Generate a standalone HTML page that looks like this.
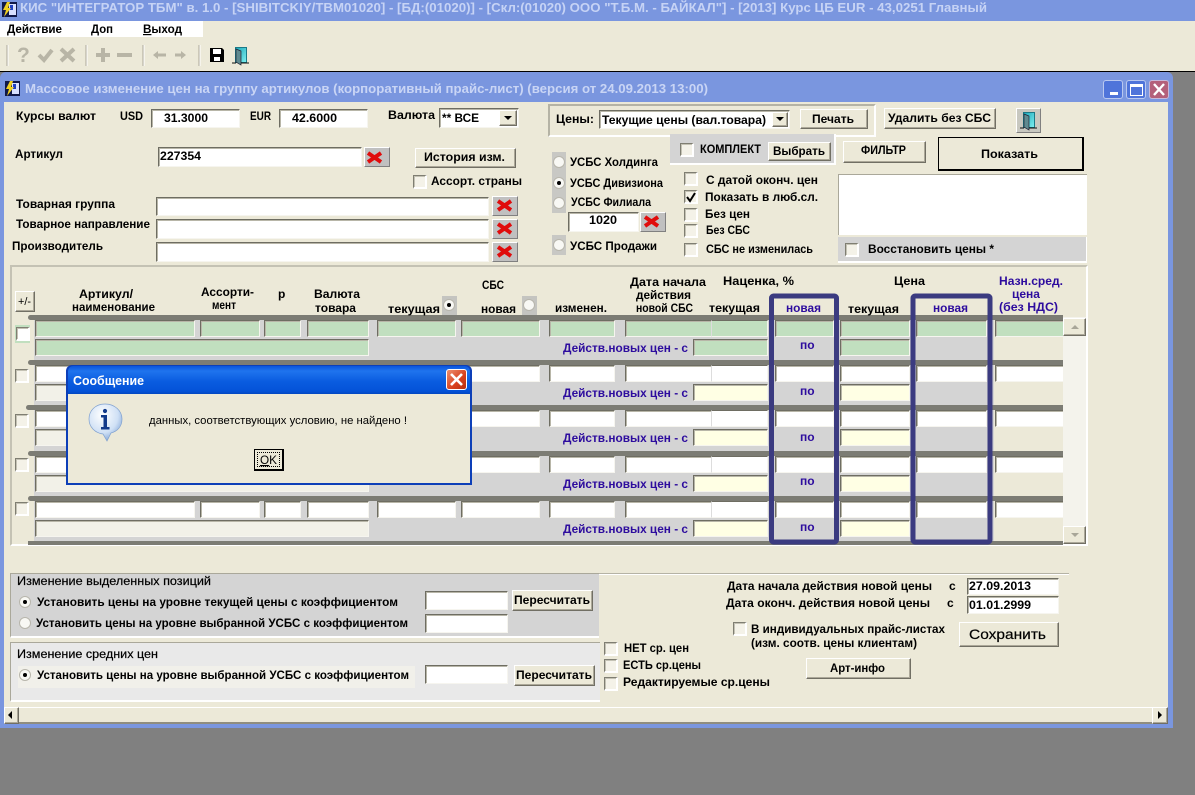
<!DOCTYPE html>
<html><head><meta charset="utf-8"><style>
html,body{margin:0;padding:0;width:1195px;height:795px;overflow:hidden;background:#808080}
#p{position:relative;width:1195px;height:795px;overflow:hidden;background:#808080}
#p div,#p i{position:absolute;display:block;box-sizing:border-box}
svg{position:absolute;left:0;top:0;overflow:visible}
text{font-family:"Liberation Sans",sans-serif;font-size:12px;font-weight:bold;fill:#000}
.n{font-weight:normal;font-size:11px}.u{fill:#2d0c9e}
.i{background:#fff;border-top:1px solid #6e6d62;border-left:1px solid #6e6d62;border-right:1px solid #f6f5ef;border-bottom:1px solid #f6f5ef;box-shadow:inset 1px 1px 0 #b8b6a8}
.b{background:#ece9d8;border-top:1px solid #fff;border-left:1px solid #fff;border-right:1px solid #716f64;border-bottom:1px solid #716f64;box-shadow:inset -1px -1px 0 #aca899}
.x{background:#c0c0c0;border-top:1px solid #fff;border-left:1px solid #fff;border-right:1px solid #808080;border-bottom:1px solid #808080}
.c{background:#f4f2e8;border-top:1px solid #7f7e72;border-left:1px solid #7f7e72;border-right:2px solid #fff;border-bottom:2px solid #fff;box-shadow:inset 1px 1px 0 #c4c2b4;width:14px;height:14px}
.g{background:#d4d4d4}
.r{left:0;width:1087px;height:46px}
.d{left:28px;width:1035px;height:5px;top:0;background:#7c7c74;border-radius:3px 0 0 3px}
.bg{left:34px;width:960px;height:41px;top:5px;background:#d4d4d4}
.t,.s{height:17px}.t{top:5px}.s{top:24px}
.a1{left:35px;width:160px}.a2{left:200px;width:60px}.a3{left:264px;width:37px}.a4{left:307px;width:62px}.a5{left:377px;width:79px}.a6{left:461px;width:79px}.a7{left:549px;width:66px}.a8{left:625px;width:87px}.a9{left:711px;width:57px;border-left:1px solid #ddd;box-shadow:none}.a10{left:775px;width:59px}.a11{left:840px;width:70px}.a12{left:916px;width:71px}.a13{left:995px;width:68px;border-right:0}
.w{left:35px;width:334px;background:#f2f1e8}
.y1{left:693px;width:75px;background:#ffffe4}.y2{left:840px;width:70px;background:#ffffe4}
.gr .i{background:#c1dfbf}.gr .i.w{background:#c1dfbf}
</style></head><body><div id="p">
<!-- top app chrome -->
<div style="left:0;top:0;width:1195px;height:21px;background:#7a96df"></div>
<div style="left:0;top:21px;width:1195px;height:50px;background:#ece9d8"></div>
<div style="left:0;top:21px;width:203px;height:16px;background:#fff"></div>
<div style="left:0;top:71px;width:1195px;height:1px;background:#000"></div>
<!-- window -->
<div style="left:0;top:72px;width:1173px;height:656px;background:#7a96df;border-radius:6px 6px 0 0"></div>
<div style="left:4px;top:102px;width:1164px;height:622px;background:#ece9d8"></div>
<div style="left:1103px;top:80px;width:20px;height:19px;background:#4f74da;border:1px solid #b9c8f0;border-radius:3px"></div>
<div style="left:1126px;top:80px;width:20px;height:19px;background:#4f74da;border:1px solid #b9c8f0;border-radius:3px"></div>
<div style="left:1149px;top:80px;width:20px;height:19px;background:#b4607a;border:1px solid #c8b8d8;border-radius:3px"></div>
<div style="left:1110px;top:92px;width:8px;height:3px;background:#fff"></div>
<div style="left:1130px;top:84px;width:13px;height:12px;border:1px solid #fff;border-top:3px solid #fff"></div>
<!-- top form -->
<div class="i" style="left:151px;top:109px;width:89px;height:19px"></div>
<div class="i" style="left:279px;top:109px;width:89px;height:19px"></div>
<div class="i" style="left:439px;top:108px;width:80px;height:20px"></div>
<div class="b" style="left:499px;top:110px;width:18px;height:16px"></div>
<div class="i" style="left:158px;top:147px;width:204px;height:20px"></div>
<div class="x" style="left:364px;top:147px;width:26px;height:20px"></div>
<div class="b" style="left:415px;top:148px;width:101px;height:20px"></div>
<div class="c" style="left:413px;top:175px"></div>
<div class="i" style="left:156px;top:197px;width:333px;height:19px"></div>
<div class="x" style="left:492px;top:196px;width:26px;height:20px"></div>
<div class="i" style="left:156px;top:219px;width:333px;height:20px"></div>
<div class="x" style="left:492px;top:219px;width:26px;height:20px"></div>
<div class="i" style="left:156px;top:242px;width:333px;height:20px"></div>
<div class="x" style="left:492px;top:242px;width:26px;height:20px"></div>
<div style="left:548px;top:104px;width:328px;height:33px;border:2px solid #fff;border-top-color:#b5b3a5;border-left-color:#b5b3a5"></div>
<div class="i" style="left:599px;top:110px;width:191px;height:19px"></div>
<div class="b" style="left:772px;top:112px;width:16px;height:15px"></div>
<div class="b" style="left:800px;top:109px;width:68px;height:20px"></div>
<div class="b" style="left:884px;top:108px;width:112px;height:21px"></div>
<div class="x" style="left:1016px;top:108px;width:25px;height:25px;background:#c8c8c0"></div>
<div class="g" style="left:670px;top:134px;width:166px;height:31px;border-right:2px solid #fff;border-bottom:2px solid #fff"></div>
<div class="c" style="left:680px;top:143px"></div>
<div class="b" style="left:768px;top:142px;width:63px;height:19px"></div>
<div class="b" style="left:843px;top:141px;width:83px;height:22px"></div>
<div style="left:938px;top:137px;width:146px;height:34px;background:#ece9d8;border:2px solid #000;border-top:1px solid #000;border-left:1px solid #000"></div>
<div class="g" style="left:552px;top:152px;width:14px;height:21px;background:#c8c8c4"></div>
<div class="g" style="left:552px;top:173px;width:14px;height:20px;background:#c8c8c4"></div>
<div class="g" style="left:552px;top:193px;width:14px;height:20px;background:#c8c8c4"></div>
<div class="g" style="left:552px;top:235px;width:14px;height:20px;background:#c8c8c4"></div>
<div class="i" style="left:568px;top:212px;width:71px;height:20px"></div>
<div class="x" style="left:640px;top:212px;width:26px;height:20px"></div>
<div class="c" style="left:684px;top:172px"></div><div class="c" style="left:684px;top:190px"></div><div class="c" style="left:684px;top:208px"></div><div class="c" style="left:684px;top:224px"></div><div class="c" style="left:684px;top:243px"></div>
<div style="left:838px;top:174px;width:249px;height:61px;background:#fff;border-top:1px solid #aaa89a;border-left:1px solid #aaa89a"></div>
<div class="g" style="left:838px;top:237px;width:249px;height:26px;border-right:1px solid #fff;border-bottom:2px solid #fff"></div>
<div class="c" style="left:845px;top:243px"></div>
<!-- grid -->
<div style="left:10px;top:265px;width:1078px;height:281px;background:#ece9d8;border:2px solid #fff;border-top-color:#c4c2b4;border-left-color:#c4c2b4"></div>
<div class="b" style="left:15px;top:291px;width:20px;height:21px"></div>
<div class="g" style="left:442px;top:296px;width:15px;height:19px;background:#c4c4c0"></div>
<div class="g" style="left:522px;top:296px;width:15px;height:19px;background:#c4c4c0"></div>
<div style="left:15px;top:325px;width:15px;height:18px;background:#c1dfbf"></div>
<div class="r gr" style="top:315px"><div class="bg"></div><div class="d"></div><div class="c" style="left:16px;top:12px;background:#fff"></div>
<div class="i t a1"></div><div class="i t a2"></div><div class="i t a3"></div><div class="i t a4"></div><div class="i t a5"></div><div class="i t a6"></div><div class="i t a7"></div><div class="i t a8"></div><div class="i t a9"></div><div class="i t a10"></div><div class="i t a11"></div><div class="i t a12"></div><div class="i t a13"></div><div class="i s w"></div><div class="i s y1"></div><div class="i s y2"></div></div>
<div class="r" style="top:360px"><div class="bg"></div><div class="d"></div><div class="c" style="left:15px;top:9px"></div>
<div class="i t a1"></div><div class="i t a2"></div><div class="i t a3"></div><div class="i t a4"></div><div class="i t a5"></div><div class="i t a6"></div><div class="i t a7"></div><div class="i t a8"></div><div class="i t a9"></div><div class="i t a10"></div><div class="i t a11"></div><div class="i t a12"></div><div class="i t a13"></div><div class="i s w"></div><div class="i s y1"></div><div class="i s y2"></div></div>
<div class="r" style="top:405px"><div class="bg"></div><div class="d" style="left:26px;width:1037px"></div><div class="c" style="left:15px;top:9px"></div>
<div class="i t a1"></div><div class="i t a2"></div><div class="i t a3"></div><div class="i t a4"></div><div class="i t a5"></div><div class="i t a6"></div><div class="i t a7"></div><div class="i t a8"></div><div class="i t a9"></div><div class="i t a10"></div><div class="i t a11"></div><div class="i t a12"></div><div class="i t a13"></div><div class="i s w"></div><div class="i s y1"></div><div class="i s y2"></div></div>
<div class="r" style="top:451px"><div class="bg"></div><div class="d"></div><div class="c" style="left:15px;top:7px"></div>
<div class="i t a1"></div><div class="i t a2"></div><div class="i t a3"></div><div class="i t a4"></div><div class="i t a5"></div><div class="i t a6"></div><div class="i t a7"></div><div class="i t a8"></div><div class="i t a9"></div><div class="i t a10"></div><div class="i t a11"></div><div class="i t a12"></div><div class="i t a13"></div><div class="i s w"></div><div class="i s y1"></div><div class="i s y2"></div></div>
<div class="r" style="top:496px"><div class="bg"></div><div class="d"></div><div class="c" style="left:15px;top:6px"></div>
<div class="i t a1"></div><div class="i t a2"></div><div class="i t a3"></div><div class="i t a4"></div><div class="i t a5"></div><div class="i t a6"></div><div class="i t a7"></div><div class="i t a8"></div><div class="i t a9"></div><div class="i t a10"></div><div class="i t a11"></div><div class="i t a12"></div><div class="i t a13"></div><div class="i s w"></div><div class="i s y1"></div><div class="i s y2"></div></div>
<div style="left:28px;top:541px;width:1035px;height:4px;background:#7c7c74"></div>
<!-- scrollbar -->
<div style="left:1063px;top:317px;width:23px;height:227px;background:#f4f3ec"></div>
<div class="b" style="left:1063px;top:318px;width:23px;height:18px"></div>
<div class="b" style="left:1063px;top:526px;width:23px;height:18px"></div>
<!-- bottom -->
<div class="g" style="left:10px;top:573px;width:589px;height:65px;border-top:1px solid #aaa89a;border-left:1px solid #aaa89a;border-bottom:2px solid #fff"></div>
<div class="i" style="left:425px;top:591px;width:83px;height:19px"></div>
<div class="i" style="left:425px;top:614px;width:83px;height:19px"></div>
<div class="b" style="left:512px;top:590px;width:81px;height:21px"></div>
<div style="left:599px;top:573px;width:470px;height:2px;background:#b5b3a5;border-bottom:1px solid #fff"></div>
<div style="left:10px;top:642px;width:590px;height:60px;background:#e9e9e9;border-top:1px solid #aaa89a;border-left:1px solid #aaa89a;border-bottom:2px solid #fff"></div>
<div style="left:18px;top:666px;width:397px;height:22px;background:#f1f0ea"></div>
<div class="i" style="left:425px;top:665px;width:83px;height:19px"></div>
<div class="b" style="left:514px;top:665px;width:81px;height:21px"></div>
<div class="c" style="left:604px;top:642px"></div><div class="c" style="left:604px;top:659px"></div><div class="c" style="left:604px;top:677px"></div>
<div class="i" style="left:967px;top:578px;width:92px;height:17px"></div>
<div class="i" style="left:967px;top:596px;width:92px;height:18px"></div>
<div class="c" style="left:733px;top:622px"></div>
<div class="b" style="left:959px;top:622px;width:100px;height:25px"></div>
<div class="b" style="left:806px;top:658px;width:105px;height:21px"></div>
<div style="left:4px;top:707px;width:1164px;height:17px;border-top:1px solid #fff;border-bottom:2px solid #8f8d80"></div>
<div class="b" style="left:4px;top:707px;width:15px;height:17px"></div>
<div class="b" style="left:1152px;top:707px;width:16px;height:17px"></div>

<svg width="1195" height="795" xmlns="http://www.w3.org/2000/svg">
<defs>
<linearGradient id="tl" x1="0" y1="0" x2="1" y2="1"><stop offset="0" stop-color="#1aa6b8"/><stop offset="1" stop-color="#7ff0f0"/></linearGradient>
<g id="x"><path d="M1 1L14 10M14 1L1 10" stroke="#e00c0c" stroke-width="4" fill="none"/></g>
<g id="rd"><circle cx="6" cy="6" r="5.5" fill="#f8f8f4" stroke="#b8b6ac"/></g>
<g id="dr"><rect x="3.5" y=".5" width="11" height="15" fill="url(#tl)" stroke="#1a7a88" stroke-width="1"/><path d="M4 2L9 4V18L4 15Z" fill="#5f8a90" stroke="#223" stroke-width=".7"/><path d="M0 16H4M9 16H17" stroke="#111"/></g>
<g id="ic"><rect width="15" height="15" fill="#101848"/><rect x="7" y="2" width="7" height="11" fill="#d8e0ff"/><rect x="8" y="3" width="3" height="5" fill="#2040c0"/><path d="M5 0L1 8H4L2 15L9 6H6L8 0Z" fill="#f0d020"/></g>
</defs>
<!-- title & menu -->
<use href="#ic" x="2" y="2"/>
<text x="20" y="12" textLength="967" lengthAdjust="spacingAndGlyphs" style="fill:#c6d3f5;font-size:13px">КИС "ИНТЕГРАТОР ТБМ" в. 1.0 - [SHIBITCKIY/TBM01020] - [БД:(01020)] - [Скл:(01020) ООО "Т.Б.М. - БАЙКАЛ"] - [2013] Курс ЦБ EUR - 43,0251 Главный</text>
<text x="7" y="33" textLength="55" lengthAdjust="spacingAndGlyphs"><tspan text-decoration="underline">Д</tspan>ействие</text>
<text x="91" y="33" textLength="22" lengthAdjust="spacingAndGlyphs"><tspan text-decoration="underline">Д</tspan>оп</text>
<text x="143" y="33" textLength="39" lengthAdjust="spacingAndGlyphs"><tspan text-decoration="underline">В</tspan>ыход</text>
<!-- toolbar -->
<path d="M7 45V66M86 45V66M143 45V66M199 45V66" stroke="#aca899" stroke-width="1"/>
<path d="M8 45V66M87 45V66M144 45V66M200 45V66" stroke="#fff" stroke-width="1"/>
<text x="17" y="62" style="font-size:21px;fill:#b8b5a6">?</text>
<path d="M39 55L44 60L52 50" stroke="#b8b5a6" stroke-width="4" fill="none"/>
<path d="M61 49L74 61M74 49L61 61" stroke="#b8b5a6" stroke-width="4" fill="none"/>
<path d="M96 55H110M103 48V62" stroke="#b8b5a6" stroke-width="4" fill="none"/>
<path d="M117 55H132" stroke="#b8b5a6" stroke-width="4" fill="none"/>
<path d="M153 55L158 51V53.5H166V56.5H158V59Z" fill="#b8b5a6"/>
<path d="M186 55L181 51V53.5H175V56.5H181V59Z" fill="#b8b5a6"/>
<path d="M210 48H222L224 50V62H210Z" fill="#000"/><rect x="213" y="49" width="8" height="5" fill="#fff"/><rect x="214" y="57" width="6" height="4" fill="#fff"/>
<use href="#dr" x="232" y="47"/>
<!-- window title -->
<use href="#ic" x="5" y="81"/>
<text x="25" y="93" textLength="683" lengthAdjust="spacingAndGlyphs" style="fill:#c9d5f5;font-size:13px">Массовое изменение цен на группу артикулов (корпоративный прайс-лист) (версия от 24.09.2013 13:00)</text>
<path d="M1154 84L1164 95M1164 84L1154 95" stroke="#fff" stroke-width="2.4"/>
<!-- form labels -->
<text x="16" y="120" textLength="80" lengthAdjust="spacingAndGlyphs">Курсы валют</text>
<text x="120" y="120" textLength="23" lengthAdjust="spacingAndGlyphs">USD</text>
<text x="250" y="120" textLength="21" lengthAdjust="spacingAndGlyphs">EUR</text>
<text x="388" y="119" textLength="47" lengthAdjust="spacingAndGlyphs">Валюта</text>
<text x="164" y="122" textLength="44" lengthAdjust="spacingAndGlyphs">31.3000</text>
<text x="292" y="122" textLength="45" lengthAdjust="spacingAndGlyphs">42.6000</text>
<text x="442" y="122" textLength="37" lengthAdjust="spacingAndGlyphs">** ВСЕ</text>
<path d="M504 116H512L508 120Z" fill="#000"/>
<text x="15" y="158" textLength="48" lengthAdjust="spacingAndGlyphs">Артикул</text>
<text x="160" y="160" textLength="41" lengthAdjust="spacingAndGlyphs">227354</text>
<use href="#x" x="367" y="152"/>
<text x="424" y="161" textLength="81" lengthAdjust="spacingAndGlyphs">История изм.</text>
<text x="431" y="185" textLength="91" lengthAdjust="spacingAndGlyphs">Ассорт. страны</text>
<text x="16" y="208" textLength="99" lengthAdjust="spacingAndGlyphs">Товарная группа</text>
<text x="16" y="228" textLength="134" lengthAdjust="spacingAndGlyphs">Товарное направление</text>
<text x="12" y="250" textLength="91" lengthAdjust="spacingAndGlyphs">Производитель</text>
<use href="#x" x="497" y="200"/><use href="#x" x="497" y="223"/><use href="#x" x="497" y="246"/>
<text x="556" y="123" textLength="38" lengthAdjust="spacingAndGlyphs">Цены:</text>
<text x="602" y="124" textLength="164" lengthAdjust="spacingAndGlyphs">Текущие цены (вал.товара)</text>
<path d="M776 117H784L780 121Z" fill="#000"/>
<text x="812" y="123" textLength="42" lengthAdjust="spacingAndGlyphs">Печать</text>
<text x="888" y="122" textLength="103" lengthAdjust="spacingAndGlyphs">Удалить без СБС</text>
<use href="#dr" x="1020" y="112"/>
<text x="700" y="153" textLength="61" lengthAdjust="spacingAndGlyphs">КОМПЛЕКТ</text>
<text x="773" y="155" textLength="52" lengthAdjust="spacingAndGlyphs">Выбрать</text>
<text x="861" y="154" textLength="45" lengthAdjust="spacingAndGlyphs">ФИЛЬТР</text>
<text x="981" y="158" textLength="57" lengthAdjust="spacingAndGlyphs">Показать</text>
<use href="#rd" x="553" y="156"/><use href="#rd" x="553" y="177"/><circle cx="559" cy="183" r="2" fill="#000"/><use href="#rd" x="553" y="197"/><use href="#rd" x="553" y="239"/>
<text x="570" y="166" textLength="88" lengthAdjust="spacingAndGlyphs">УСБС Холдинга</text>
<text x="570" y="187" textLength="93" lengthAdjust="spacingAndGlyphs">УСБС Дивизиона</text>
<text x="571" y="206" textLength="80" lengthAdjust="spacingAndGlyphs">УСБС Филиала</text>
<text x="589" y="224" textLength="28" lengthAdjust="spacingAndGlyphs">1020</text>
<use href="#x" x="644" y="216"/>
<text x="570" y="250" textLength="87" lengthAdjust="spacingAndGlyphs">УСБС Продажи</text>
<text x="706" y="184" textLength="112" lengthAdjust="spacingAndGlyphs">С датой оконч. цен</text>
<path d="M687 197L690 201L695 193" stroke="#000" stroke-width="2" fill="none"/>
<text x="705" y="201" textLength="113" lengthAdjust="spacingAndGlyphs">Показать в люб.сл.</text>
<text x="705" y="218" textLength="45" lengthAdjust="spacingAndGlyphs">Без цен</text>
<text x="706" y="234" textLength="44" lengthAdjust="spacingAndGlyphs">Без СБС</text>
<text x="706" y="253" textLength="107" lengthAdjust="spacingAndGlyphs">СБС не изменилась</text>
<text x="868" y="253" textLength="126" lengthAdjust="spacingAndGlyphs">Восстановить цены *</text>
<!-- grid headers -->
<text x="18" y="305" class="n" textLength="13" lengthAdjust="spacingAndGlyphs">+/-</text>
<text x="79" y="298" textLength="54" lengthAdjust="spacingAndGlyphs">Артикул/</text>
<text x="72" y="311" textLength="83" lengthAdjust="spacingAndGlyphs">наименование</text>
<text x="201" y="296" textLength="53" lengthAdjust="spacingAndGlyphs">Ассорти-</text>
<text x="212" y="309" textLength="24" lengthAdjust="spacingAndGlyphs">мент</text>
<text x="278" y="298">р</text>
<text x="314" y="298" textLength="46" lengthAdjust="spacingAndGlyphs">Валюта</text>
<text x="315" y="312" textLength="41" lengthAdjust="spacingAndGlyphs">товара</text>
<text x="388" y="313" textLength="52" lengthAdjust="spacingAndGlyphs">текущая</text>
<use href="#rd" x="443" y="299"/><circle cx="449" cy="305" r="2" fill="#000"/>
<text x="482" y="289" textLength="22" lengthAdjust="spacingAndGlyphs">СБС</text>
<text x="481" y="313" textLength="35" lengthAdjust="spacingAndGlyphs">новая</text>
<use href="#rd" x="523" y="299"/>
<text x="555" y="312" textLength="52" lengthAdjust="spacingAndGlyphs">изменен.</text>
<text x="630" y="286" textLength="76" lengthAdjust="spacingAndGlyphs">Дата начала</text>
<text x="636" y="299" textLength="55" lengthAdjust="spacingAndGlyphs">действия</text>
<text x="636" y="312" textLength="57" lengthAdjust="spacingAndGlyphs">новой СБС</text>
<text x="723" y="285" textLength="71" lengthAdjust="spacingAndGlyphs">Наценка, %</text>
<text x="709" y="312" textLength="51" lengthAdjust="spacingAndGlyphs">текущая</text>
<text x="786" y="312" class="u" textLength="35" lengthAdjust="spacingAndGlyphs">новая</text>
<text x="848" y="313" textLength="51" lengthAdjust="spacingAndGlyphs">текущая</text>
<text x="933" y="312" class="u" textLength="35" lengthAdjust="spacingAndGlyphs">новая</text>
<text x="894" y="285" textLength="31" lengthAdjust="spacingAndGlyphs">Цена</text>
<text x="999" y="285" class="u" textLength="64" lengthAdjust="spacingAndGlyphs">Назн.сред.</text>
<text x="1012" y="298" class="u" textLength="28" lengthAdjust="spacingAndGlyphs">цена</text>
<text x="999" y="311" class="u" textLength="59" lengthAdjust="spacingAndGlyphs">(без НДС)</text>
<!-- row labels -->
<text x="563" y="352" class="u" textLength="125" lengthAdjust="spacingAndGlyphs">Действ.новых цен - с</text>
<text x="563" y="397" class="u" textLength="125" lengthAdjust="spacingAndGlyphs">Действ.новых цен - с</text>
<text x="563" y="442" class="u" textLength="125" lengthAdjust="spacingAndGlyphs">Действ.новых цен - с</text>
<text x="563" y="488" class="u" textLength="125" lengthAdjust="spacingAndGlyphs">Действ.новых цен - с</text>
<text x="563" y="533" class="u" textLength="125" lengthAdjust="spacingAndGlyphs">Действ.новых цен - с</text>
<text x="800" y="349" class="u">по</text><text x="800" y="395" class="u">по</text><text x="800" y="441" class="u">по</text><text x="800" y="485" class="u">по</text><text x="800" y="531" class="u">по</text>
<path d="M1071 329H1079L1075 325Z" fill="#a8a698"/><path d="M1071 533H1079L1075 537Z" fill="#a8a698"/>
<rect x="771.5" y="296" width="65" height="246" rx="2" fill="none" stroke="#3b3b80" stroke-width="5"/>
<rect x="913" y="296" width="77" height="246" rx="2" fill="none" stroke="#3b3b80" stroke-width="5"/>
<!-- bottom labels -->
<text x="17" y="585" textLength="194" lengthAdjust="spacingAndGlyphs" style="font-weight:normal;stroke:#000;stroke-width:.2">Изменение выделенных позиций</text>
<use href="#rd" x="19" y="596"/><circle cx="25" cy="602" r="2" fill="#000"/>
<text x="37" y="606" textLength="361" lengthAdjust="spacingAndGlyphs">Установить цены на уровне текущей цены с коэффициентом</text>
<use href="#rd" x="19" y="617"/>
<text x="36" y="627" textLength="372" lengthAdjust="spacingAndGlyphs">Установить цены на уровне выбранной УСБС с коэффициентом</text>
<text x="514" y="604" textLength="76" lengthAdjust="spacingAndGlyphs">Пересчитать</text>
<text x="17" y="658" textLength="141" lengthAdjust="spacingAndGlyphs" style="font-weight:normal;stroke:#000;stroke-width:.2">Изменение средних цен</text>
<use href="#rd" x="19" y="669"/><circle cx="25" cy="675" r="2" fill="#000"/>
<text x="37" y="679" textLength="372" lengthAdjust="spacingAndGlyphs">Установить цены на уровне выбранной УСБС с коэффициентом</text>
<text x="516" y="679" textLength="76" lengthAdjust="spacingAndGlyphs">Пересчитать</text>
<text x="624" y="652" textLength="65" lengthAdjust="spacingAndGlyphs">НЕТ ср. цен</text>
<text x="623" y="669" textLength="78" lengthAdjust="spacingAndGlyphs">ЕСТЬ ср.цены</text>
<text x="623" y="686" textLength="147" lengthAdjust="spacingAndGlyphs">Редактируемые ср.цены</text>
<text x="727" y="590" textLength="205" lengthAdjust="spacingAndGlyphs">Дата начала действия новой цены</text>
<text x="949" y="590">с</text>
<text x="726" y="607" textLength="204" lengthAdjust="spacingAndGlyphs">Дата оконч.  действия новой цены</text>
<text x="947" y="607">с</text>
<text x="969" y="590" textLength="62" lengthAdjust="spacingAndGlyphs">27.09.2013</text>
<text x="969" y="609" textLength="62" lengthAdjust="spacingAndGlyphs">01.01.2999</text>
<text x="751" y="633" textLength="194" lengthAdjust="spacingAndGlyphs">В индивидуальных прайс-листах</text>
<text x="751" y="647" textLength="166" lengthAdjust="spacingAndGlyphs">(изм. соотв. цены клиентам)</text>
<text x="969" y="639" class="n" textLength="77" lengthAdjust="spacingAndGlyphs" style="font-size:14px;stroke:#000;stroke-width:.2">Сохранить</text>
<text x="830" y="672" textLength="55" lengthAdjust="spacingAndGlyphs">Арт-инфо</text>
<path d="M12 711V719L8 715Z" fill="#000"/><path d="M1158 711V719L1162 715Z" fill="#000"/>
</svg>

<!-- dialog -->
<div style="left:66px;top:365px;width:406px;height:120px;background:#0d3fb8;border-radius:6px 6px 0 0"></div>
<div style="left:68px;top:366px;width:402px;height:28px;background:linear-gradient(#0a55dc,#1f74ee 18%,#0a5ce0 55%,#0452d8 90%,#0347c0);border-radius:5px 5px 0 0"></div>
<div style="left:68px;top:394px;width:402px;height:89px;background:#ece9d8"></div>
<div style="left:446px;top:369px;width:21px;height:21px;background:linear-gradient(135deg,#ec9070,#d8401c 60%,#b83010);border:1px solid #fff;border-radius:3px"></div>
<div style="left:254px;top:449px;width:30px;height:22px;background:#ece9d8;border:1px solid #000;border-right-width:2px;border-bottom-width:2px"></div>
<div style="left:257px;top:452px;width:23px;height:15px;border:1px dotted #000"></div>
<svg width="1195" height="795" xmlns="http://www.w3.org/2000/svg">
<defs><radialGradient id="ib" cx=".4" cy=".3" r=".8"><stop offset="0" stop-color="#fff"/><stop offset=".6" stop-color="#cfe0f5"/><stop offset="1" stop-color="#6f97cf"/></radialGradient></defs>
<text x="73" y="385" textLength="71" lengthAdjust="spacingAndGlyphs" style="fill:#fff;font-size:13px">Сообщение</text>
<path d="M451 374L462 385M462 374L451 385" stroke="#fff" stroke-width="2.6"/>
<path d="M105 404C95 404 89 411 89 419C89 427 95 433 103 434L107 441L111 433C118 431 122 426 122 419C122 411 115 404 105 404Z" fill="url(#ib)" stroke="#7fa0cf" stroke-width=".7"/>
<circle cx="105" cy="411" r="2.1" fill="#123a8a"/>
<path d="M101 415H107V427H109.5V429.5H101V427H103.5V417.5H101Z" fill="#123a8a"/>
<text x="149" y="424" class="n" textLength="258" lengthAdjust="spacingAndGlyphs">данных, соответствующих условию, не найдено !</text>
<text x="260" y="464" class="n" textLength="17" lengthAdjust="spacingAndGlyphs" style="font-size:12px"><tspan text-decoration="underline">O</tspan>K</text>
</svg>
</div></body></html>
